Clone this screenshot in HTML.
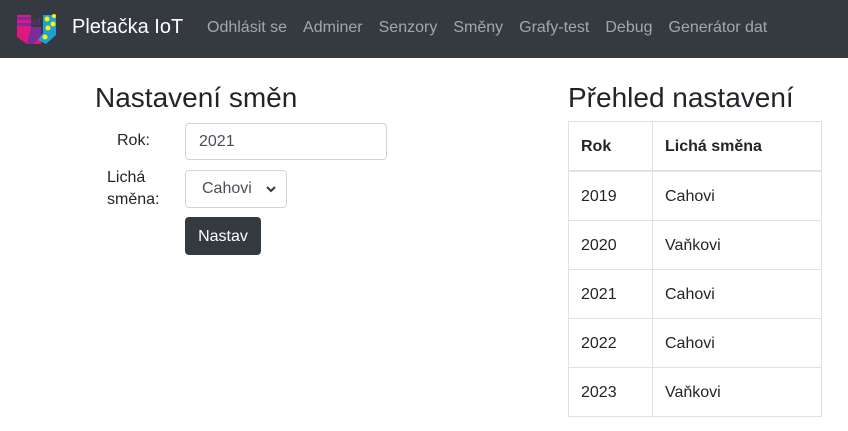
<!DOCTYPE html>
<html><head><meta charset="utf-8"><style>
body{margin:0;width:848px;height:431px;font-family:"Liberation Sans",sans-serif;color:#212529;background:#fff;position:relative;overflow:hidden}
nav{position:absolute;top:0;left:0;width:848px;height:58px;background:#343a40}
.brand{position:absolute;left:72px;top:16px;font-size:20px;color:#fff}
.links{position:absolute;left:207px;top:19px;font-size:16px;color:rgba(255,255,255,.55);white-space:nowrap}
.links span{margin-right:16px}
h2{position:absolute;margin:0;font-weight:400;font-size:28px}
.lbl{position:absolute;font-size:16px}
.inp{position:absolute;left:185px;top:123px;width:202px;height:37px;border:1px solid #ced4da;border-radius:4px;box-sizing:border-box;padding:9px 13px;font-size:16px;color:#495057}
.sel{position:absolute;left:185px;top:170px;width:102px;height:38px;border:1px solid #ced4da;border-radius:4px;box-sizing:border-box;padding:9px 16px;font-size:16px;color:#495057}
.btn{position:absolute;left:185px;top:217px;width:76px;height:38px;background:#343a40;border-radius:4px;color:#fff;font-size:16px;text-align:center;line-height:39px}
table{position:absolute;left:568px;top:121px;width:254px;border-collapse:collapse;font-size:16px}
td,th{border:1px solid #dee2e6;padding:2px 12px 0;height:46px;text-align:left}
th{border-bottom:2px solid #dee2e6}
</style></head><body>
<nav>
<svg style="position:absolute;left:15px;top:13px" width="42" height="32" viewBox="0 0 42 32">
<path d="M2 2h14v18l10 6v5H12L2 24z" fill="#e0177f"/>
<rect x="2" y="4" width="14" height="3" fill="#7b2c9a"/><rect x="2" y="10" width="14" height="3" fill="#7b2c9a"/>
<path d="M16 14h10v10l-8 7H12z" fill="#7b2c9a"/>
<path d="M28 2h13v20l-10 9-8-4 5-7z" fill="#1ea0d6"/>
<circle cx="32" cy="6" r="2.5" fill="#fff200"/><circle cx="38" cy="11" r="2.5" fill="#fff200"/><circle cx="33" cy="15" r="2.5" fill="#fff200"/><circle cx="30" cy="24" r="2.5" fill="#fff200"/><circle cx="39" cy="3" r="2" fill="#fff200"/>
<text x="15" y="12" font-size="8" fill="#7b2c9a" font-family="Liberation Sans">IoT</text>
</svg>
<div class="brand">Pletačka IoT</div>
<div class="links"><span>Odhlásit se</span><span>Adminer</span><span>Senzory</span><span>Směny</span><span>Grafy-test</span><span>Debug</span><span>Generátor dat</span></div>
</nav>
<h2 style="left:95px;top:82px">Nastavení směn</h2>
<h2 style="left:568px;top:82px">Přehled nastavení</h2>
<div class="lbl" style="left:117px;top:132px">Rok:</div>
<div class="lbl" style="left:107px;top:167px;line-height:22px">Lichá<br>směna:</div>
<div class="inp">2021</div>
<div class="sel">Cahovi <svg style="position:absolute;right:10px;top:15px" width="10" height="7" viewBox="0 0 10 7"><path d="M1 1l4 4 4-4" stroke="#343a40" stroke-width="2" fill="none"/></svg></div>
<div class="btn">Nastav</div>
<table>
<tr><th style="width:59px">Rok</th><th>Lichá směna</th></tr>
<tr><td>2019</td><td>Cahovi</td></tr>
<tr><td>2020</td><td>Vaňkovi</td></tr>
<tr><td>2021</td><td>Cahovi</td></tr>
<tr><td>2022</td><td>Cahovi</td></tr>
<tr><td>2023</td><td>Vaňkovi</td></tr>
</table>
</body></html>
